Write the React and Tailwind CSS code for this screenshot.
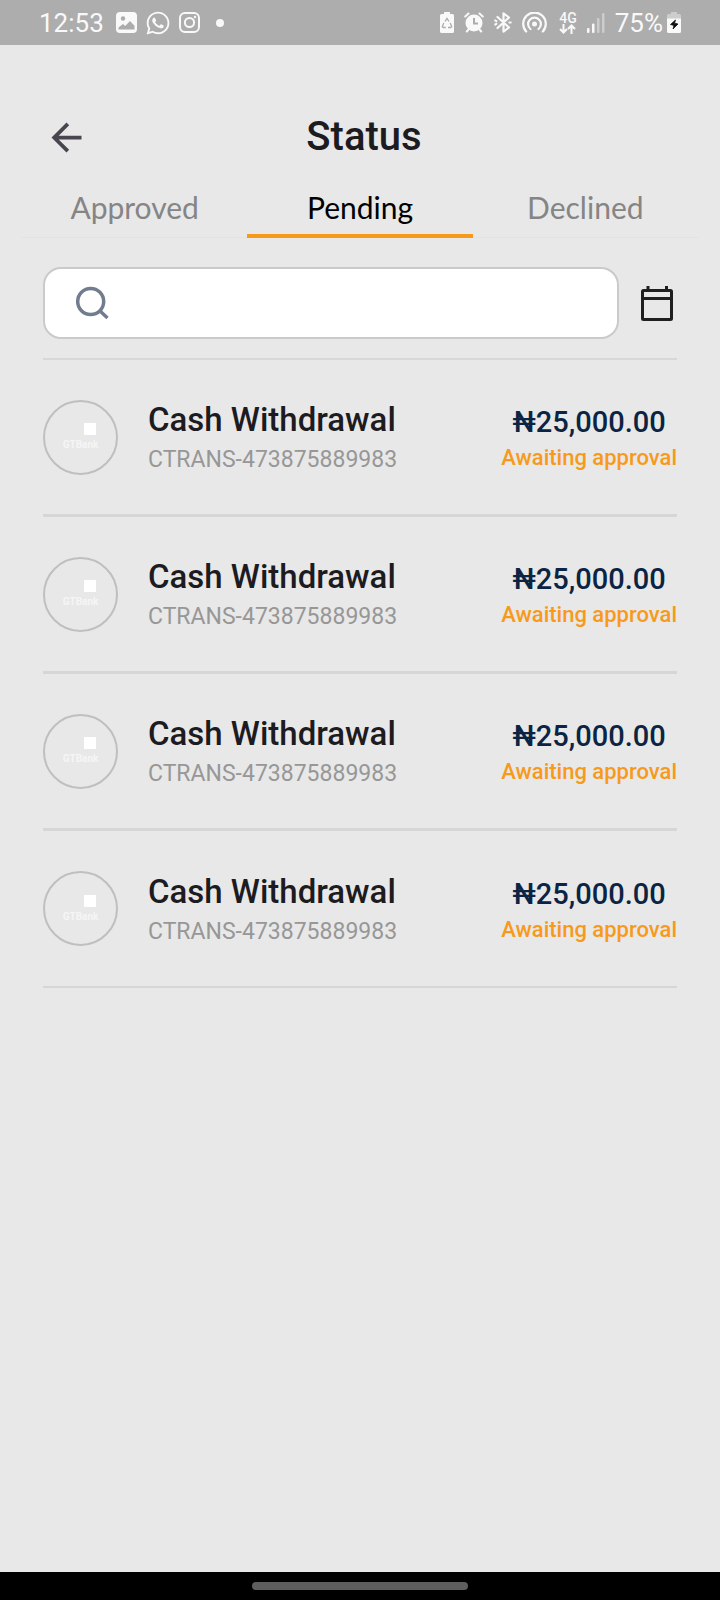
import { FaWhatsapp } from "react-icons/fa";
import { MdArrowBack } from "react-icons/md";

const transactions = [1, 2, 3, 4].map((id) => ({
  id,
  title: "Cash Withdrawal",
  reference: "CTRANS-473875889983",
  amount: "₦25,000.00",
  status: "Awaiting approval",
}));

const tabs = ["Approved", "Pending", "Declined"];

function ImageIcon() {
  return (
    <svg viewBox="0 0 21 21" className="size-[21px]" aria-hidden="true">
      <rect width="21" height="21" rx="4" fill="#f9f9f9" />
      <circle cx="7" cy="6.5" r="2.2" fill="#acacac" />
      <path d="M2.5 15.5 7 12l2.2 2L14 9l4.5 4.7v3.8h-16z" fill="#acacac" />
    </svg>
  );
}

function InstagramIcon() {
  return (
    <svg viewBox="0 0 21 21" className="size-[21px]" fill="none" stroke="#f9f9f9" strokeWidth="2" aria-hidden="true">
      <rect x="1" y="1" width="19" height="19" rx="5" />
      <circle cx="10.5" cy="10.5" r="4.6" />
      <circle cx="16" cy="5" r="1.2" fill="#f9f9f9" stroke="none" />
    </svg>
  );
}

function RecycleBatteryIcon() {
  return (
    <svg viewBox="0 0 14 21" className="h-[21px] w-[14px]" aria-hidden="true">
      <path d="M4 0h6v2h2.500Q14 2 14 3.500v16q0 1.500-1.500 1.500h-11Q0 21 0 19.500v-16Q0 2 1.500 2H4z" fill="#f9f9f9" />
      <g fill="none" stroke="#acacac" strokeWidth="1.300">
        <path d="M5 9.500 7 6.500l2 3M10.200 11l1.500 3.500-1 1H8M5.800 15.500H3.200l-.9-1L3.800 11" />
      </g>
    </svg>
  );
}

function AlarmIcon() {
  return (
    <svg viewBox="0 0 20 21" className="h-[21px] w-5" fill="none" stroke="#f9f9f9" strokeWidth="2" strokeLinecap="round" aria-hidden="true">
      <circle cx="10" cy="11" r="8.500" fill="#f9f9f9" stroke="none" />
      <path d="M1.200 4.500 4.500 1.500M18.800 4.500 15.500 1.500M4.500 17.500 2.800 19.500M15.500 17.500l1.700 2" />
      <path d="M10 6v5.500h4" stroke="#acacac" strokeLinecap="butt" />
    </svg>
  );
}

function BluetoothIcon() {
  return (
    <svg viewBox="0 0 18 21" className="h-[21px] w-[18px]" fill="none" stroke="#f9f9f9" strokeWidth="2.200" strokeLinejoin="round" strokeLinecap="round" aria-hidden="true">
      <path d="M3.500 5 15 15.500 9.500 19.700V1.300L15 5.500 3.500 16" />
      <path d="M1.300 8.500l1 .6M1.300 12.500l1-.6M15.500 10.500h1.200" />
    </svg>
  );
}

function HotspotIcon() {
  return (
    <svg viewBox="0 0 25 21" className="mr-0.5 h-[21px] w-[25px]" fill="none" stroke="#f9f9f9" strokeWidth="2.200" strokeLinecap="round" aria-hidden="true">
      <circle cx="12.500" cy="12" r="2.500" fill="#f9f9f9" stroke="none" />
      <path d="M8.500 17a6.400 6.400 0 1 1 8 0" />
      <path d="M4.200 19.500a11.300 11.300 0 1 1 16.600 0" />
    </svg>
  );
}

function DataArrowsIcon() {
  return (
    <svg viewBox="0 0 17 10" className="h-[10px] w-[17px]" fill="none" stroke="#f9f9f9" strokeWidth="2" aria-hidden="true">
      <path d="M4.500 0v8.500M1 5l3.500 3.500L8 5M12.500 10V1.500M9 5l3.500-3.500L16 5" />
    </svg>
  );
}

function SignalIcon() {
  return (
    <svg viewBox="0 0 18 20" className="h-5 w-[18px]" fill="#f9f9f9" aria-hidden="true">
      <rect x="0" y="15" width="2.500" height="5" rx="1" />
      <rect x="5" y="10.500" width="2.500" height="9.500" rx="1" />
      <rect x="10" y="5" width="2.500" height="15" rx="1" opacity="0.4" />
      <rect x="15" y="0" width="2.500" height="20" rx="1" opacity="0.4" />
    </svg>
  );
}

function ChargingIcon() {
  return (
    <svg viewBox="0 0 14 21" className="h-[21px] w-[14px]" aria-hidden="true">
      <path d="M4 0h6v2h2.500Q14 2 14 3.500V7H0V3.500Q0 2 1.500 2H4z" fill="#cdcdcd" />
      <path d="M0 6.500h14v13q0 1.500-1.500 1.500h-11Q0 21 0 19.500z" fill="#f9f9f9" />
      <path d="m8.500 8-5 4.500 3.500 1-1 3.500 5-5-3.500-.8z" fill="#111" stroke="#111" strokeWidth="0.800" />
    </svg>
  );
}

function SearchIcon() {
  return (
    <svg viewBox="0 0 34 34" className="size-[34px] shrink-0" fill="none" stroke="#717d8f" strokeWidth="3.500" aria-hidden="true">
      <circle cx="15.700" cy="15.500" r="13" />
      <path d="m24 24 8.500 8" />
    </svg>
  );
}

function CalendarIcon() {
  return (
    <svg viewBox="0 0 32 35" className="h-[35px] w-8" fill="none" stroke="#1e1f1e" strokeWidth="3" aria-hidden="true">
      <rect x="1.500" y="4.500" width="29" height="29" rx="1" />
      <path d="M2 12.500h28M7 0v5M25.500 0v5" />
    </svg>
  );
}

function BankLogo() {
  return (
    <div className="flex size-[75px] shrink-0 flex-col items-center justify-center rounded-full border-2 border-[#bfbfbf] text-white">
      <span className="ml-[18px] size-3 bg-white" />
      <span className="mt-1 text-[10px] font-bold leading-3 opacity-60">GTBank</span>
    </div>
  );
}

function StatusBar() {
  return (
    <header className="flex h-[45px] items-center justify-between bg-[#adadad] px-[39px] text-[26px] leading-8 text-[#f9f9f9]">
      <div className="flex items-center gap-2">
        <span className="mr-1">12:53</span>
        <ImageIcon />
        <FaWhatsapp className="size-[26px]" />
        <InstagramIcon />
        <span className="ml-2 size-2 rounded-full bg-[#f9f9f9]" />
      </div>
      <div className="flex items-center gap-2.5">
        <RecycleBatteryIcon />
        <AlarmIcon />
        <BluetoothIcon />
        <HotspotIcon />
        <div className="flex flex-col items-center">
          <span className="text-[14px] font-medium leading-3">4G</span>
          <DataArrowsIcon />
        </div>
        <SignalIcon />
        <div className="flex items-center gap-1">
          <span>75%</span>
          <ChargingIcon />
        </div>
      </div>
    </header>
  );
}

function Transaction({ item }) {
  return (
    <li className="flex h-[157px] items-center border-b-[3px] border-[#d6d6d6] last:border-b-2">
      <BankLogo />
      <div className="ml-[30px] pt-1.5">
        <h2 className="text-[33px] font-medium leading-10 text-[#1c1b1f]">{item.title}</h2>
        <p className="text-[23px] leading-10 text-[#979797]">{item.reference}</p>
      </div>
      <div className="ml-auto pt-0.5 text-center">
        <p className="text-[29px] font-medium leading-10 text-[#0c2444]">{item.amount}</p>
        <p className="text-[22px] font-medium leading-8 text-[#f79a1b]">{item.status}</p>
      </div>
    </li>
  );
}

export default function App() {
  return (
    <div className="flex min-h-screen flex-col bg-[#e8e8e8] font-['Roboto',sans-serif]">
      <StatusBar />
      <main className="grow">
        <div className="grid grid-cols-[1fr_auto_1fr] items-center px-11 pt-[67px]">
          <button type="button" aria-label="Back" className="justify-self-start text-[#49454f]">
            <MdArrowBack className="size-[45px]" />
          </button>
          <h1 className="pl-2 text-[40px] font-medium leading-[50px] text-[#1c1b1f]">Status</h1>
        </div>
        <div role="tablist" className="mx-[22px] mt-3 grid grid-cols-3 border-b border-[#e6deea] font-['Lato',sans-serif] text-[30px] leading-[38px]">
          {tabs.map((tab) => (
            <button
              key={tab}
              type="button"
              role="tab"
              aria-selected={tab === "Pending"}
              className="-mb-px border-b-4 border-transparent pt-[14px] pb-2 text-[#858585] aria-selected:border-[#f79a1b] aria-selected:text-black"
            >
              {tab}
            </button>
          ))}
        </div>
        <section className="px-[43px] pt-[29px]">
          <div className="flex items-center pb-[19px]">
            <label className="flex h-[72px] grow items-center rounded-[18px] border-2 border-[#cacaca] bg-white px-[30px]">
              <SearchIcon />
              <input type="search" aria-label="Search transactions" className="ml-3 w-full bg-transparent text-[26px] outline-none" />
            </label>
            <button type="button" aria-label="Pick a date" className="mr-1 ml-[22px]">
              <CalendarIcon />
            </button>
          </div>
          <ul className="border-t-2 border-[#d8d8d8]">
            {transactions.map((item) => (
              <Transaction key={item.id} item={item} />
            ))}
          </ul>
        </section>
      </main>
      <footer className="flex h-7 items-center justify-center bg-black">
        <span className="h-2 w-[216px] rounded-full bg-[#5e5e5e]" />
      </footer>
    </div>
  );
}
